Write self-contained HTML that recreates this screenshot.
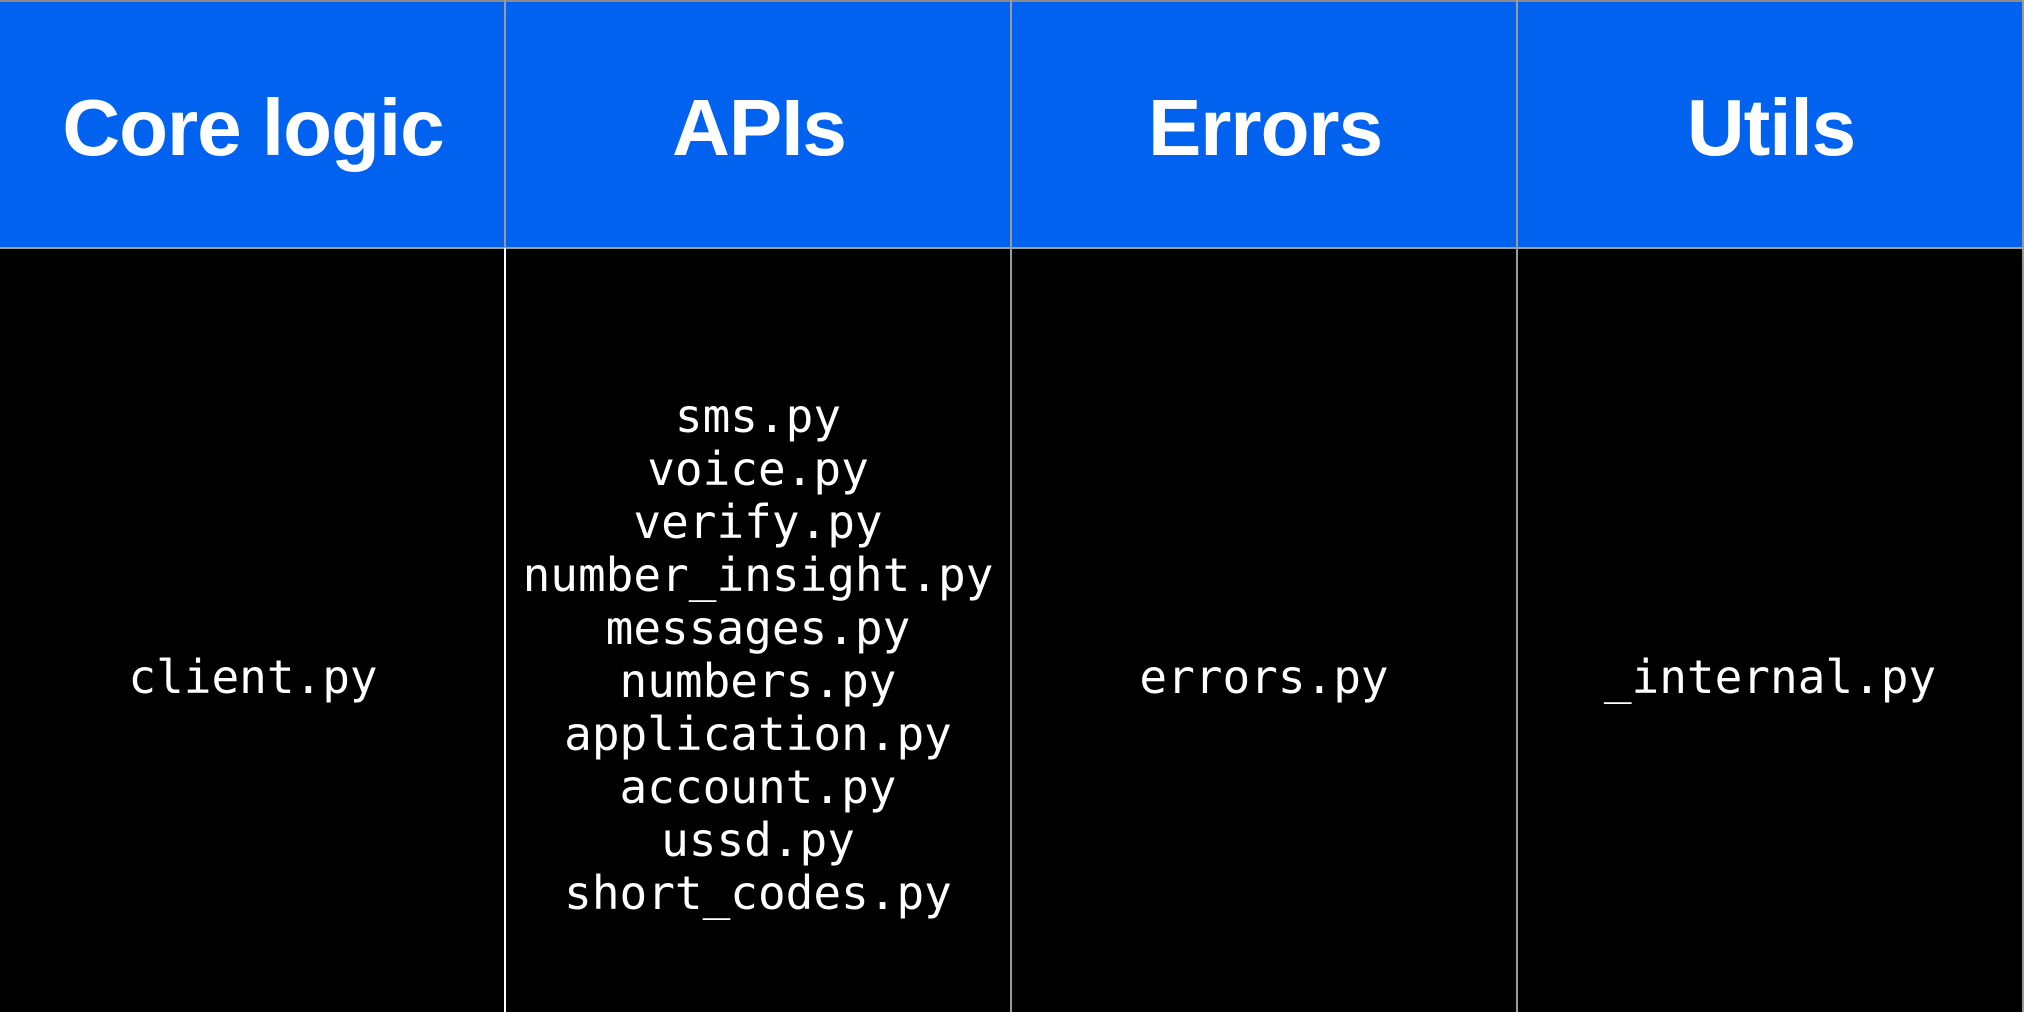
<!DOCTYPE html>
<html><head><meta charset="utf-8"><style>
html,body{margin:0;padding:0;background:#000;}
body{width:2024px;height:1012px;position:relative;overflow:hidden;}
.hdr{position:absolute;top:0;left:0;width:2024px;height:248px;background:#0062EE;border-top:2px solid #8a8a8a;box-sizing:border-box;}
.h{position:absolute;top:4px;height:248px;width:506px;display:flex;align-items:center;justify-content:center;color:#fff;font:bold 80px "Liberation Sans",sans-serif;letter-spacing:-1px;}
.vl{position:absolute;width:2px;background:#9a9a9a;}
.hl{position:absolute;left:0;top:247px;width:2024px;height:2px;background:#a0a0a0;}
.col{position:absolute;width:506px;text-align:center;color:#fff;font:46px/53px "DejaVu Sans Mono","Liberation Mono",monospace;}
</style></head><body>
<div class="hdr"></div>
<div class="h" style="left:0">Core logic</div>
<div class="h" style="left:506px">APIs</div>
<div class="h" style="left:1012px">Errors</div>
<div class="h" style="left:1518px">Utils</div>
<div class="hl"></div>
<div class="vl" style="left:504px;top:0;height:248px"></div>
<div class="vl" style="left:504px;top:248px;height:764px;background:#fff"></div>
<div class="vl" style="left:1010px;top:0;height:1012px"></div>
<div class="vl" style="left:1516px;top:0;height:1012px"></div>
<div class="vl" style="left:2022px;top:0;height:1012px"></div>
<div class="col" style="left:0;top:651px">client.py</div>
<div class="col" style="left:505px;top:390px">sms.py<br>voice.py<br>verify.py<br>number_insight.py<br>messages.py<br>numbers.py<br>application.py<br>account.py<br>ussd.py<br>short_codes.py</div>
<div class="col" style="left:1011px;top:651px">errors.py</div>
<div class="col" style="left:1517px;top:651px">_internal.py</div>
</body></html>
